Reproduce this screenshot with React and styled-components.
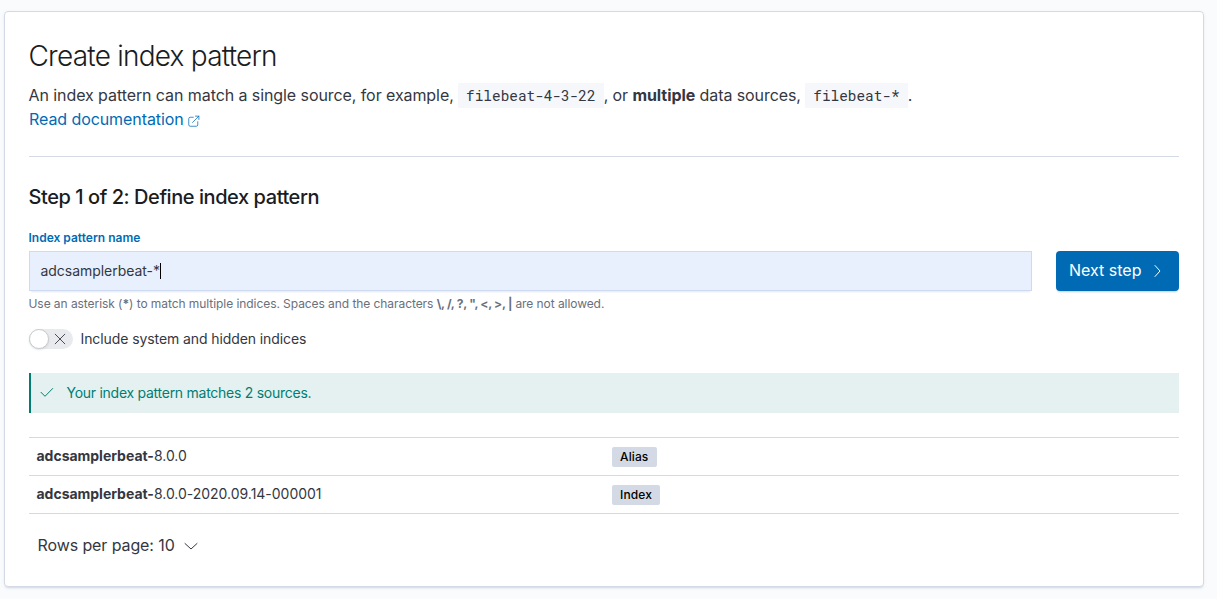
import React from 'react';
import styled, { createGlobalStyle } from 'styled-components';

const Global = createGlobalStyle`
  *{box-sizing:border-box}
  body{margin:0;background:#fafbfd;color:#343741;font-family:Inter,"Liberation Sans",sans-serif;font-size:14px;line-height:21px}
  h1,h2,p{margin:0}
  svg{flex:none}
`;
const Page = styled.main`padding:11px 13px 12px 4px;height:599px;`;
const Panel = styled.section`
  height:576px;background:#fff;border:1px solid #d3dae6;border-radius:4px;padding:24px;text-indent:-.5px;
  box-shadow:0 2px 2px -1px rgba(152,162,179,.3),0 1px 5px -2px rgba(152,162,179,.3);
`;
const Title = styled.h1`font-size:28px;line-height:40px;font-weight:300;letter-spacing:-.77px;color:#1a1c21;`;
const Intro = styled.p`font-size:16px;line-height:24px;margin-top:7px;letter-spacing:-.08px;`;
const Code = styled.code`font:14.4px/20px "Roboto Mono","DejaVu Sans Mono",monospace;letter-spacing:0;background:#f5f7fa;padding:3px 8px;`;
const Link = styled.a`color:#006bb4;svg{vertical-align:-2px;}`;
const Rule = styled.hr`border:0;height:1px;background:#d3dae6;margin:25px 0 24px;`;
const StepTitle = styled.h2`font-size:20px;line-height:32px;font-weight:500;color:#1a1c21;letter-spacing:-.44px;`;
const Label = styled.label`display:block;font-size:12px;line-height:18px;font-weight:600;color:#006bb4;margin-top:16px;`;
const FieldRow = styled.div`display:flex;gap:24px;margin-top:4px;`;
const Input = styled.div`
  flex:1;height:40px;border:1px solid #cddaf1;background:#e8f0fe;padding:0 11px 1px;display:flex;align-items:center;letter-spacing:-.04px;
  box-shadow:0 3px 2px -2px rgba(152,162,179,.25);
`;
const Caret = styled.span`width:1px;height:16px;background:#000;`;
const Button = styled.button`
  width:123px;height:40px;border:0;border-radius:4px;background:#006bb4;color:#fff;font:400 16px Inter,sans-serif;
  padding:0 13px 2px;display:flex;align-items:center;justify-content:space-between;
  box-shadow:0 2px 2px -1px rgba(54,97,126,.3);
`;
const Help = styled.p`font-size:12px;line-height:18px;color:#69707d;margin-top:4px;letter-spacing:-.065px;`;
const Characters = styled.strong`letter-spacing:-.28px;`;
const SwitchRow = styled.div`display:flex;align-items:center;gap:8px;margin-top:15px;letter-spacing:-.09px;`;
const Switch = styled.span`width:44px;height:20px;border-radius:10px;background:#e9eaee;display:flex;align-items:center;justify-content:space-between;padding-right:6px;`;
const Thumb = styled.span`width:20px;height:20px;border-radius:50%;background:#fff;border:1px solid #c9cbcd;box-shadow:0 1px 2px rgba(152,162,179,.3);`;
const Callout = styled.div`height:40px;margin-top:24px;background:#e5f1f0;color:#017d73;border-left:2px solid #017d73;display:flex;align-items:center;gap:12px;padding:0 8px 2px;letter-spacing:-.265px;`;
const Table = styled.div`margin-top:24px;border-top:1px solid #d3dae6;`;
const Row = styled.div`height:38px;border-bottom:1px solid #d3dae6;display:grid;grid-template-columns:1fr 1fr;align-items:center;padding-bottom:2px;`;
const Cell = styled.div`padding:0 8px;letter-spacing:-.02px;`;
const Badge = styled.span`display:inline-block;font-size:12px;font-weight:500;line-height:20px;padding:0 8.5px;background:#d3dae6;border-radius:2px;color:#000;text-indent:0;letter-spacing:.12px;`;
const Pager = styled.div`font-size:16px;display:flex;align-items:center;gap:8px;margin:21px 0 0 9px;letter-spacing:-.1px;`;

const Icon = ({ d, size = 16 }) => (
  <svg width={size} height={size} viewBox="0 0 16 16" fill="none" stroke="currentColor" strokeLinecap="round" strokeLinejoin="round"><path d={d} /></svg>
);

export default function App() {
  return <><Global /><Page><Panel>
    <Title>Create index pattern</Title>
    <Intro>An index pattern can match a single source, for example, <Code>filebeat-4-3-22</Code>, or <b>multiple</b> data sources, <Code>filebeat-*</Code>.<br /><Link>Read documentation <Icon size={12} d="M7 3H3q-2 0-2 2v8q0 2 2 2h8q2 0 2-2V9M10 1.5h4.5V6M14.5 1.5 6 10" /></Link></Intro>
    <Rule />
    <StepTitle>Step 1 of 2: Define index pattern</StepTitle>
    <Label>Index pattern name</Label>
    <FieldRow><Input>adcsamplerbeat-*<Caret /></Input><Button>Next step <Icon d="m5 3.5 5 5.5-5 5.5" /></Button></FieldRow>
    <Help>Use an asterisk (<b>*</b>) to match multiple indices. Spaces and the characters <Characters>\, /, ?, ", &lt;, &gt;, |</Characters> are not allowed.</Help>
    <SwitchRow><Switch><Thumb /><Icon size={14} d="M2.5 2.5l11 11M13.5 2.5l-11 11" /></Switch>Include system and hidden indices</SwitchRow>
    <Callout><Icon d="m2 8.3 4 4L13.7 4.5" />Your index pattern matches 2 sources.</Callout>
    <Table>
      <Row><Cell><b>adcsamplerbeat-</b>8.0.0</Cell><Cell><Badge>Alias</Badge></Cell></Row>
      <Row><Cell><b>adcsamplerbeat-</b>8.0.0-2020.09.14-000001</Cell><Cell><Badge>Index</Badge></Cell></Row>
    </Table>
    <Pager>Rows per page: 10 <Icon d="m2 5.5 6 5.5 6-5.5" /></Pager>
  </Panel></Page></>;
}
